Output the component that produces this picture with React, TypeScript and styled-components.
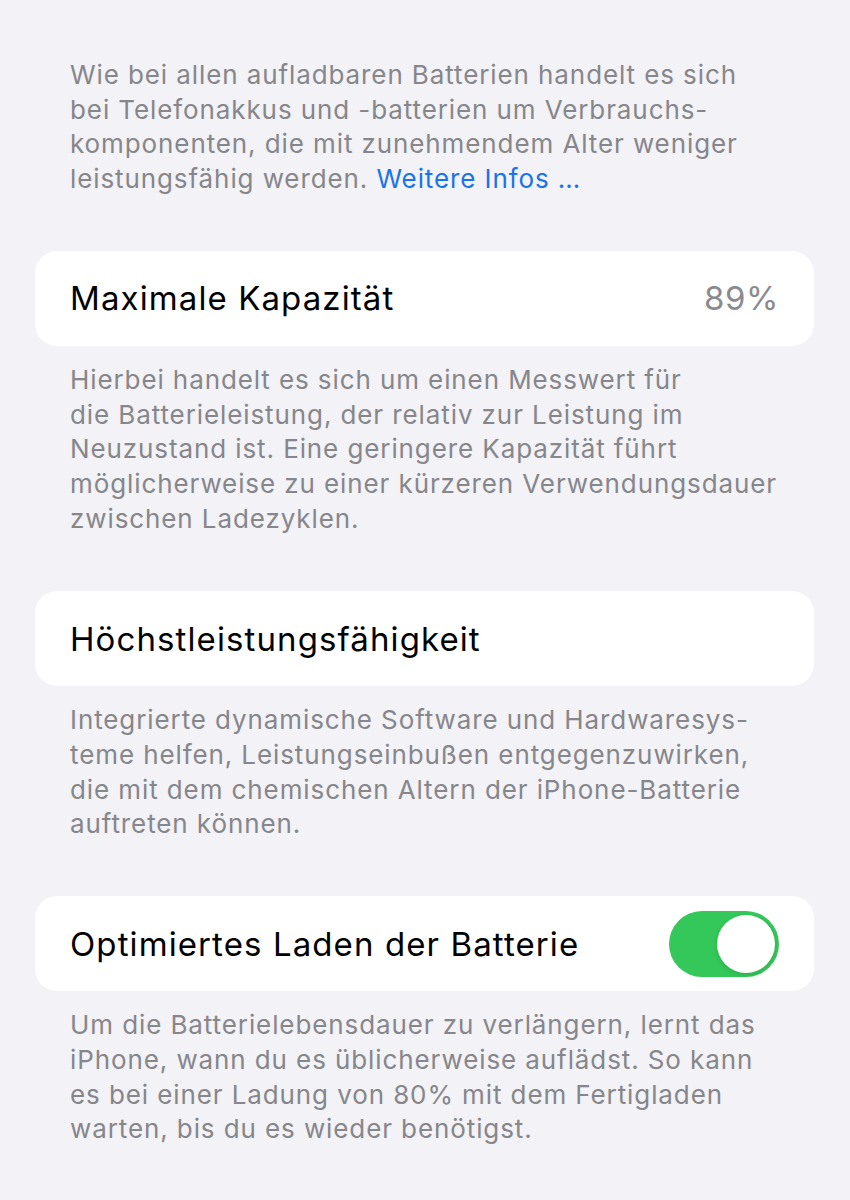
import React from 'react'
import styled, { createGlobalStyle } from 'styled-components'

const GlobalStyle = createGlobalStyle`
  html, body {
    margin: 0;
    padding: 0;
    background: #f2f2f7;
  }
  body {
    font-family: Inter, "Noto Sans", "Liberation Sans", sans-serif;
    -webkit-font-smoothing: antialiased;
  }
`

const Page = styled.main`
  width: 850px;
  min-height: 1200px;
  box-sizing: border-box;
  padding: 58px 36px 0 35px;
  display: flex;
  flex-direction: column;
`

const Section = styled.section<{ $gap?: number }>`
  display: flex;
  flex-direction: column;
  margin-bottom: ${p => p.$gap ?? 55}px;
`

const Card = styled.div`
  background: #ffffff;
  border-radius: 22px;
  height: 95px;
  padding: 0 35px;
  display: flex;
  align-items: center;
  justify-content: space-between;
  box-sizing: border-box;
`

const Title = styled.span`
  font-size: 33px;
  color: #000;
  letter-spacing: 1.1px;
`

const Value = styled.span`
  font-size: 33px;
  color: #8a8a8e;
  letter-spacing: 0.6px;
`

const Footer = styled.p<{ $top?: boolean }>`
  margin: 0;
  padding: ${p => (p.$top ? '0' : '17px')} 35px 0;
  font-size: 26px;
  line-height: 34.7px;
  color: #86868b;
  letter-spacing: 0.9px;
`

const Link = styled.a`
  color: #1a73e8;
  text-decoration: none;
`

const Switch = styled.span<{ $on: boolean }>`
  position: relative;
  width: 110px;
  height: 66px;
  border-radius: 33px;
  background: ${p => (p.$on ? '#34c759' : '#e9e9ea')};
  flex-shrink: 0;

  &::after {
    content: '';
    position: absolute;
    top: 4px;
    ${p => (p.$on ? 'right: 4px;' : 'left: 4px;')}
    width: 58px;
    height: 58px;
    border-radius: 50%;
    background: #fff;
    box-shadow: 0 2px 5px rgba(0, 0, 0, 0.12);
  }
`

const App: React.FC = () => (
  <>
    <GlobalStyle />
    <Page>
      <Section $gap={54}>
        <Footer $top>
          Wie bei allen aufladbaren Batterien handelt es sich
          <br />
          bei Telefonakkus und -batterien um Verbrauchs-
          <br />
          komponenten, die mit zunehmendem Alter weniger
          <br />
          leistungsfähig werden. <Link href="#">Weitere Infos …</Link>
        </Footer>
      </Section>

      <Section>
        <Card>
          <Title>Maximale Kapazität</Title>
          <Value>89%</Value>
        </Card>
        <Footer>
          Hierbei handelt es sich um einen Messwert für
          <br />
          die Batterieleistung, der relativ zur Leistung im
          <br />
          Neuzustand ist. Eine geringere Kapazität führt
          <br />
          möglicherweise zu einer kürzeren Verwendungsdauer
          <br />
          zwischen Ladezyklen.
        </Footer>
      </Section>

      <Section $gap={54}>
        <Card>
          <Title>Höchstleistungsfähigkeit</Title>
        </Card>
        <Footer>
          Integrierte dynamische Software und Hardwaresys-
          <br />
          teme helfen, Leistungseinbußen entgegenzuwirken,
          <br />
          die mit dem chemischen Altern der iPhone-Batterie
          <br />
          auftreten können.
        </Footer>
      </Section>

      <Section>
        <Card>
          <Title>Optimiertes Laden der Batterie</Title>
          <Switch $on role="switch" aria-checked />
        </Card>
        <Footer>
          Um die Batterielebensdauer zu verlängern, lernt das
          <br />
          iPhone, wann du es üblicherweise auflädst. So kann
          <br />
          es bei einer Ladung von 80% mit dem Fertigladen
          <br />
          warten, bis du es wieder benötigst.
        </Footer>
      </Section>
    </Page>
  </>
)

export default App
